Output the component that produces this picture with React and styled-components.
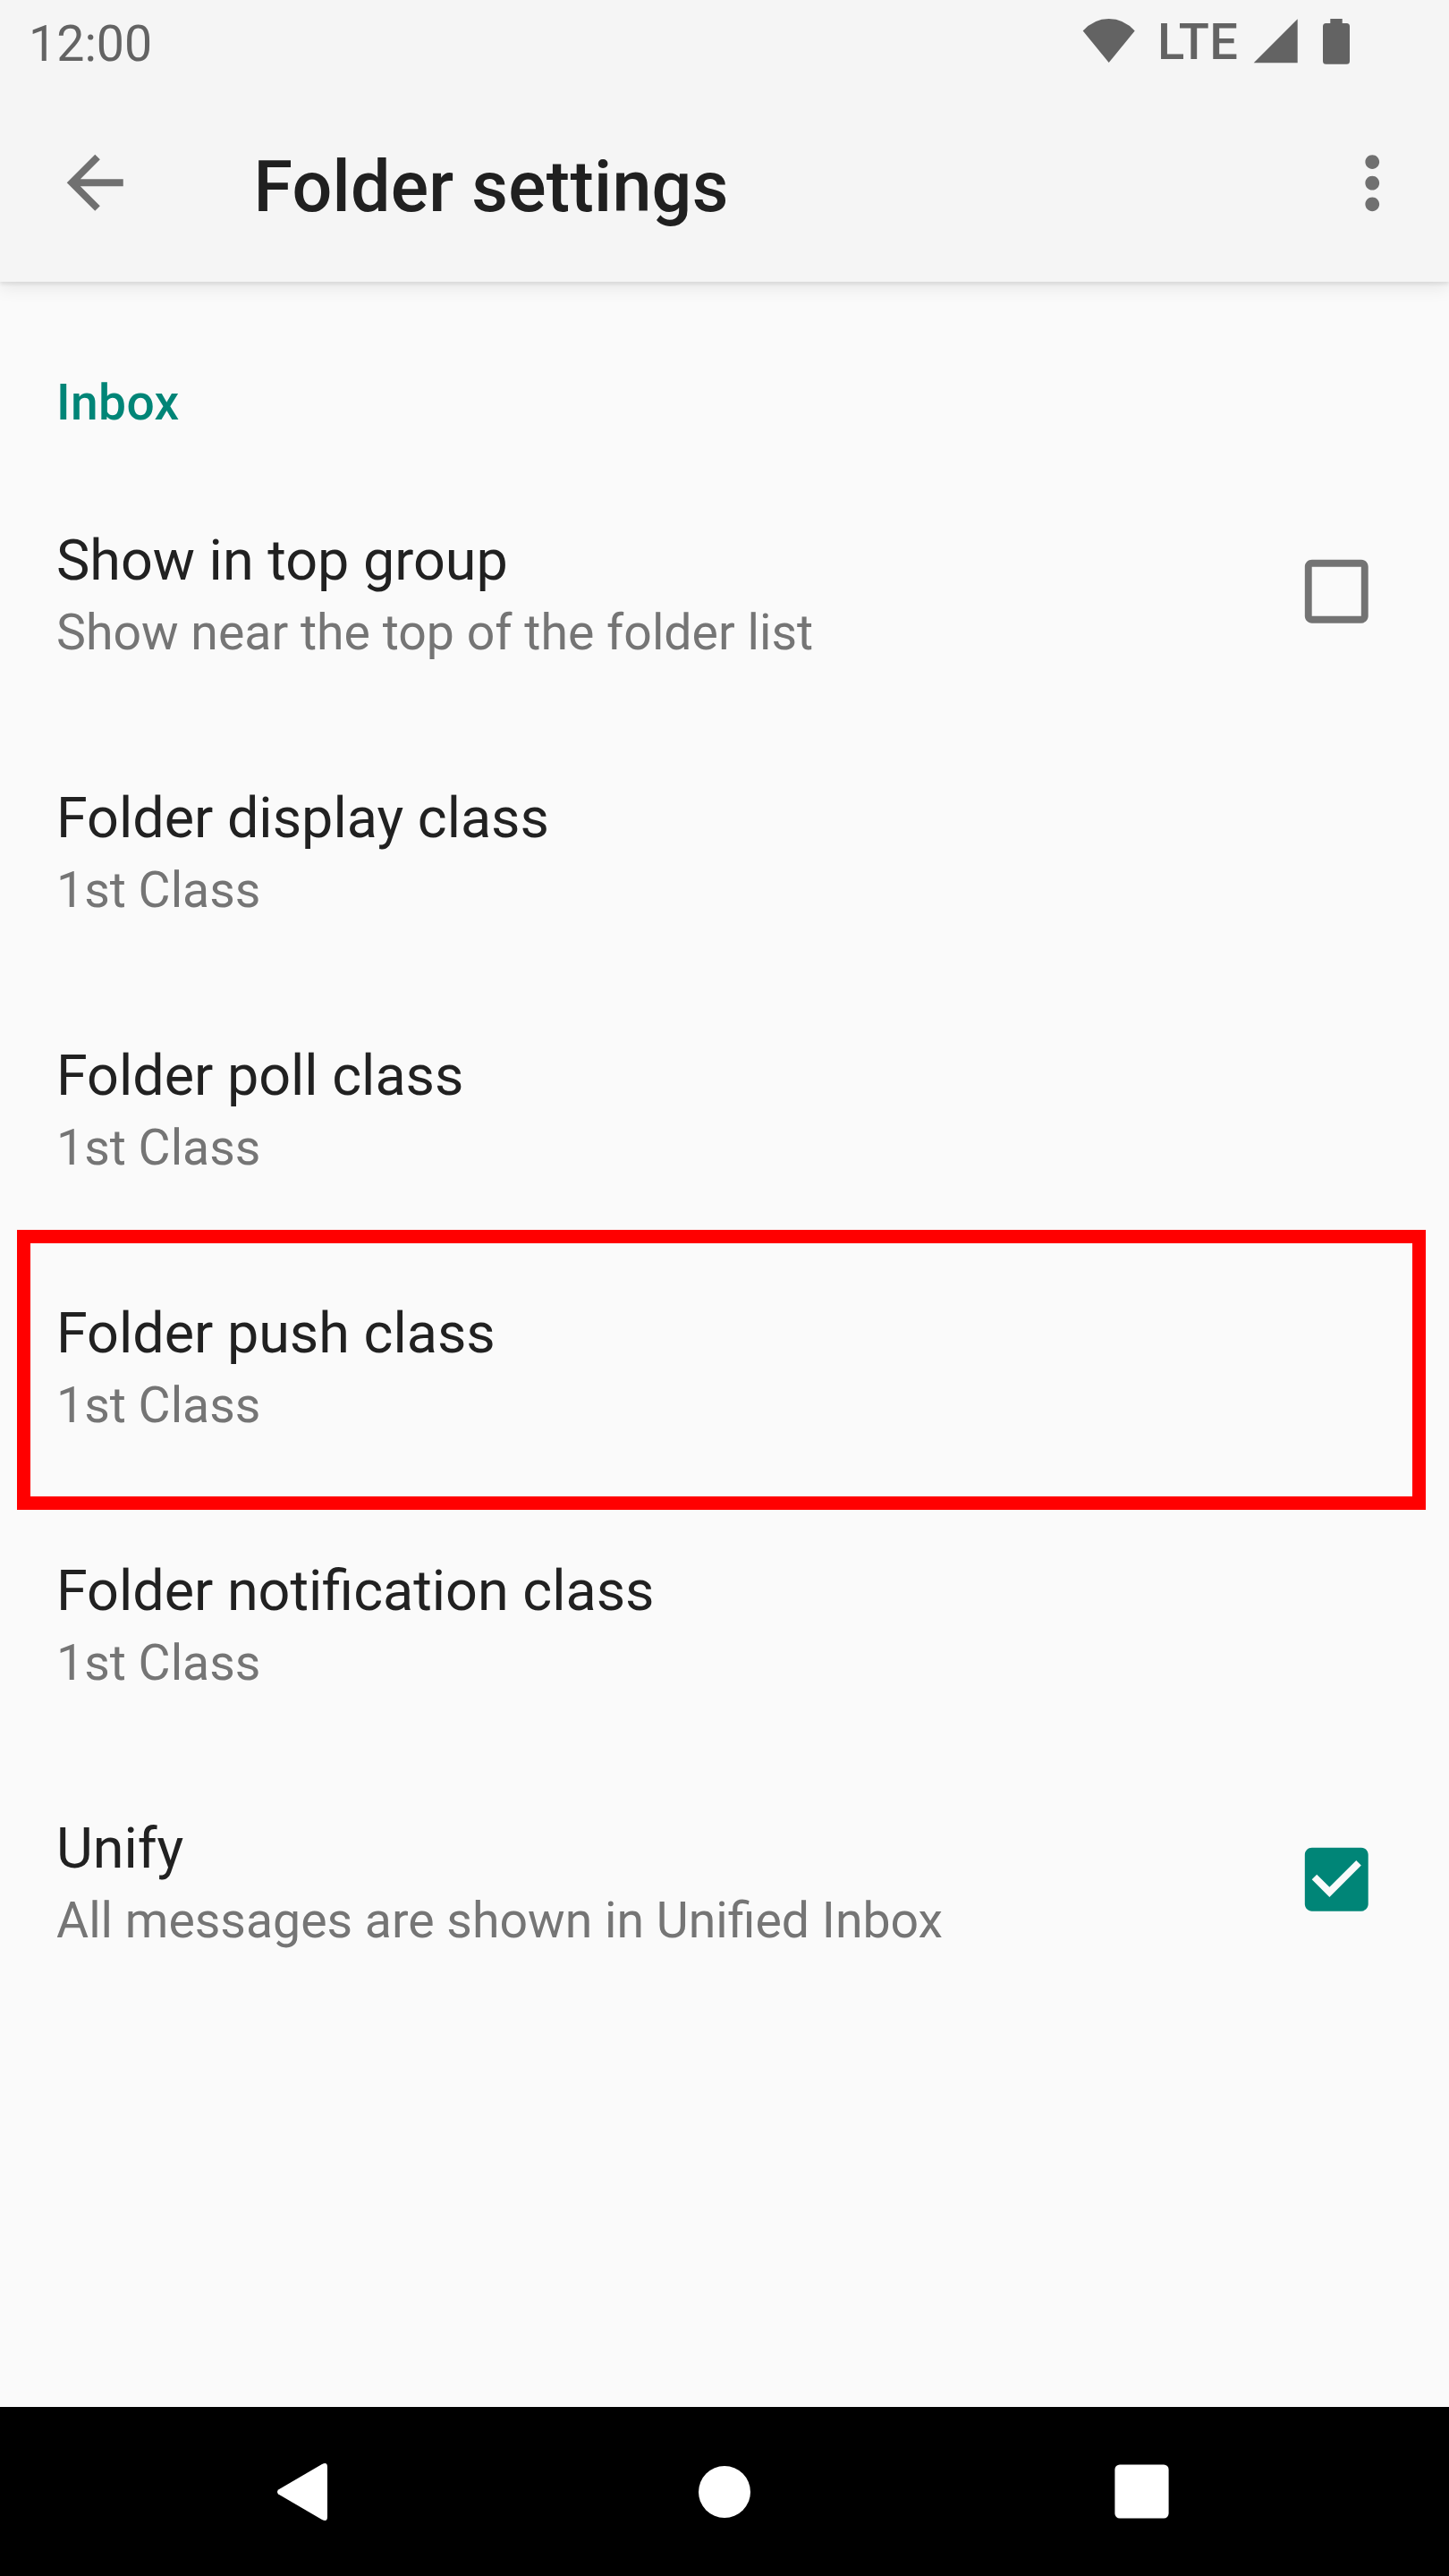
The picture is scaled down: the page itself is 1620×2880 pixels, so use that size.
import React from "react";
import styled, { createGlobalStyle } from "styled-components";

const GlobalStyle = createGlobalStyle`
  * { box-sizing: border-box; }
  body {
    margin: 0;
    background: #fafafa;
    font-family: Roboto, "Noto Sans", sans-serif;
  }
`;

const Screen = styled.div`
  display: flex;
  flex-direction: column;
  width: 1620px;
  height: 2880px;
  background: #fafafa;
  overflow: hidden;
`;

const Header = styled.header`
  flex: none;
  height: 315px;
  background: #f5f5f5;
  box-shadow: 0 3px 4px rgba(0, 0, 0, 0.08), 0 8px 18px rgba(0, 0, 0, 0.07);
`;

const StatusBar = styled.div`
  display: flex;
  align-items: flex-start;
  justify-content: space-between;
  height: 94px;
  padding: 18px 111px 0 32px;
  color: #636363;
`;

const Clock = styled.span`
  font-size: 55.5px;
  line-height: 64px;
`;

const StatusIcons = styled.div`
  display: flex;
  align-items: flex-start;
`;

const NetworkLabel = styled.span`
  width: 110px;
  padding-left: 25px;
  margin-top: -3px;
  font-size: 56px;
  font-weight: 500;
  letter-spacing: 0.4px;
  line-height: 64px;
  white-space: nowrap;
`;

const StatusGlyph = styled.svg`
  display: block;
  fill: currentColor;
  margin-top: 2px;
  margin-left: ${({ $gap }) => $gap || 0}px;
`;

const Toolbar = styled.div`
  display: flex;
  align-items: flex-start;
  height: 221px;
  padding: 62.5px 39px 0 59.3px;
  color: #707070;
`;

const Icon = styled.svg`
  display: block;
  flex: none;
  width: 94.5px;
  height: 94.5px;
  fill: ${({ $color }) => $color || "currentColor"};
`;

const Title = styled.h1`
  flex: 1;
  margin: 6.5px 0 0 129.7px;
  color: #202020;
  font-size: 79px;
  font-weight: 500;
  letter-spacing: 0.26px;
  line-height: 92px;
`;

const Settings = styled.main`
  flex: 1;
  padding-top: 103px;
`;

const SectionTitle = styled.h2`
  height: 100px;
  margin: 0;
  padding-left: 63px;
  color: #008577;
  font-size: 55.125px;
  font-weight: 500;
  letter-spacing: 0.4px;
  line-height: 65px;
`;

const Row = styled.div`
  position: relative;
  display: flex;
  align-items: flex-start;
  justify-content: space-between;
  height: 288px;
  padding: 71px 78.7px 0 63px;
`;

const Highlight = styled.div`
  position: absolute;
  top: -7px;
  left: 19px;
  width: 1574.8px;
  height: 313px;
  border: 15px solid #ff0000;
`;

const RowText = styled.div`
  display: flex;
  flex-direction: column;
  gap: 11px;
`;

const RowTitle = styled.div`
  color: #212121;
  font-size: 62.87px;
  line-height: 75px;
`;

const RowSummary = styled.div`
  color: #757575;
  font-size: 55.4px;
  line-height: 65px;
`;

const CheckSlot = styled.div`
  margin-top: 24.9px;
`;

const NavBar = styled.nav`
  display: flex;
  align-items: center;
  justify-content: space-between;
  flex: none;
  height: 189px;
  padding: 0 313px 0 309px;
  background: #000000;
`;

const NavGlyph = styled.svg`
  display: block;
  fill: #ffffff;
  margin-left: ${({ $shift }) => $shift || 0}px;
`;

const rows = [
  { title: "Show in top group", summary: "Show near the top of the folder list", checked: false },
  { title: "Folder display class", summary: "1st Class" },
  { title: "Folder poll class", summary: "1st Class" },
  { title: "Folder push class", summary: "1st Class", highlighted: true },
  { title: "Folder notification class", summary: "1st Class" },
  { title: "Unify", summary: "All messages are shown in Unified Inbox", checked: true },
];

function Checkbox({ checked }) {
  return (
    <CheckSlot>
      {checked ? (
        <Icon viewBox="0 0 24 24" $color="#008577">
          <path d="M19 3H5c-1.1 0-2 .9-2 2v14c0 1.1.9 2 2 2h14c1.1 0 2-.9 2-2V5c0-1.1-.9-2-2-2zm-9 14l-5-5 1.41-1.41L10 14.17l7.59-7.59L19 8l-9 9z" />
        </Icon>
      ) : (
        <Icon viewBox="0 0 24 24" $color="#737373">
          <path d="M19 5v14H5V5h14m0-2H5c-1.1 0-2 .9-2 2v14c0 1.1.9 2 2 2h14c1.1 0 2-.9 2-2V5c0-1.1-.9-2-2-2z" />
        </Icon>
      )}
    </CheckSlot>
  );
}

export default function App() {
  return (
    <Screen>
      <GlobalStyle />
      <Header>
        <StatusBar>
          <Clock>12:00</Clock>
          <StatusIcons>
            <StatusGlyph width="60" height="52" viewBox="0 0 60 52">
              <path d="M1.700 14.500Q14 1 30.700 1Q47.400 1 59.700 14.500L30.700 50Z" />
            </StatusGlyph>
            <NetworkLabel>LTE</NetworkLabel>
            <StatusGlyph $gap={22} width="50" height="52" viewBox="0 0 50 52">
              <path d="M0.700 50.300H49.700V1.300Z" />
            </StatusGlyph>
            <StatusGlyph $gap={28} width="30" height="52" viewBox="0 0 30 52">
              <path d="M8.300 1h13.400v5H26.500a3.500 3.500 0 0 1 3.500 3.500V48.200a3.500 3.500 0 0 1-3.500 3.500H3.500a3.500 3.500 0 0 1-3.500-3.500V9.500A3.500 3.500 0 0 1 3.500 6h4.800z" />
            </StatusGlyph>
          </StatusIcons>
        </StatusBar>
        <Toolbar>
          <Icon viewBox="0 0 24 24">
            <path d="M20 11H7.830l5.590-5.590L12 4l-8 8 8 8 1.410-1.410L7.830 13H20v-2z" />
          </Icon>
          <Title>Folder settings</Title>
          <Icon viewBox="0 0 24 24">
            <path d="M12 8.100c1.100 0 2-.9 2-2s-.9-2-2-2-2 .9-2 2 .9 2 2 2zm0 2c-1.100 0-2 .9-2 2s.9 2 2 2 2-.9 2-2-.9-2-2-2zm0 6c-1.100 0-2 .9-2 2s.9 2 2 2 2-.9 2-2-.9-2-2-2z" />
          </Icon>
        </Toolbar>
      </Header>
      <Settings>
        <SectionTitle>Inbox</SectionTitle>
        {rows.map((row) => (
          <Row key={row.title}>
            <RowText>
              <RowTitle>{row.title}</RowTitle>
              <RowSummary>{row.summary}</RowSummary>
            </RowText>
            {row.checked !== undefined && <Checkbox checked={row.checked} />}
            {row.highlighted && <Highlight />}
          </Row>
        ))}
      </Settings>
      <NavBar>
        <NavGlyph width="58" height="66" viewBox="0 0 58 66">
          <path d="M2.200 30.500L51 2Q57 -1 57 5V61Q57 67 51 64L2.200 35.500Q-0.200 33 2.200 30.500Z" />
        </NavGlyph>
        <NavGlyph $shift={6} width="58" height="58" viewBox="0 0 58 58">
          <circle cx="29" cy="29" r="29" />
        </NavGlyph>
        <NavGlyph width="61" height="61" viewBox="0 0 61 61">
          <rect x="0.400" y="0.400" width="60.200" height="60.200" rx="5.500" />
        </NavGlyph>
      </NavBar>
    </Screen>
  );
}
